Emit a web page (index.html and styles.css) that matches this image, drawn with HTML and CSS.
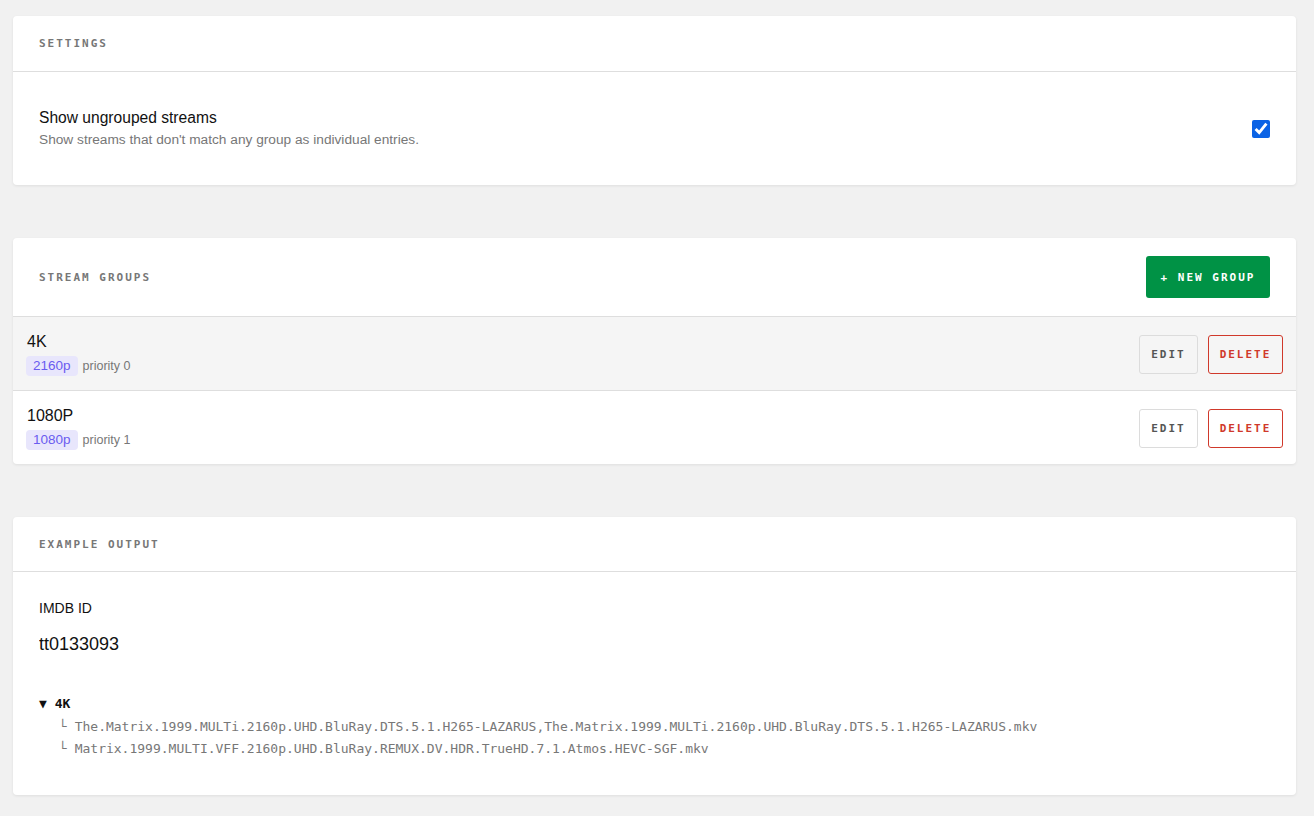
FILE: index.html
```html
<!DOCTYPE html>
<html lang="en">
<head>
    <meta charset="UTF-8">
    <meta name="viewport" content="width=device-width, initial-scale=1.0">
    <title>Stream Groups</title>
    <link rel="stylesheet" href="styles.css">
</head>
<body>
    <div class="page">

        <div class="card">
            <div class="card-head"><h2>Settings</h2></div>
            <div class="card-body setting">
                <div>
                    <div class="setting-title">Show ungrouped streams</div>
                    <div class="setting-sub">Show streams that don't match any group as individual entries.</div>
                </div>
                <input type="checkbox" class="check" checked>
            </div>
        </div>

        <div class="card">
            <div class="card-head">
                <h2>Stream Groups</h2>
                <button class="btn btn-green">+ New Group</button>
            </div>
            <div class="group active">
                <div>
                    <div class="group-name">4K</div>
                    <div class="group-meta"><span class="badge">2160p</span> priority 0</div>
                </div>
                <div class="group-actions">
                    <button class="btn btn-edit">Edit</button>
                    <button class="btn btn-delete">Delete</button>
                </div>
            </div>
            <div class="group">
                <div>
                    <div class="group-name">1080P</div>
                    <div class="group-meta"><span class="badge">1080p</span> priority 1</div>
                </div>
                <div class="group-actions">
                    <button class="btn btn-edit">Edit</button>
                    <button class="btn btn-delete">Delete</button>
                </div>
            </div>
        </div>

        <div class="card">
            <div class="card-head short"><h2>Example Output</h2></div>
            <div class="card-body output">
                <label class="field-label" for="imdb">IMDB ID</label>
                <input id="imdb" class="imdb" type="text" value="tt0133093">
                <div class="tree">
                    <div class="tree-title">▼ 4K</div>
                    <div class="tree-row">└ The.Matrix.1999.MULTi.2160p.UHD.BluRay.DTS.5.1.H265-LAZARUS,The.Matrix.1999.MULTi.2160p.UHD.BluRay.DTS.5.1.H265-LAZARUS.mkv</div>
                    <div class="tree-row">└ Matrix.1999.MULTI.VFF.2160p.UHD.BluRay.REMUX.DV.HDR.TrueHD.7.1.Atmos.HEVC-SGF.mkv</div>
                </div>
            </div>
        </div>

    </div>
</body>
</html>
```

FILE: styles.css
```css
body { margin: 0; background: #f1f1f1; font-family: "Liberation Sans", Arial, sans-serif; color: #111; }
.page { padding: 16px 18px 16px 13px; display: flex; flex-direction: column; gap: 53px; }

.card { background: #fff; border-radius: 4px; box-shadow: 0 1px 3px rgba(0,0,0,0.08); }
.card-head { min-height: 56px; box-sizing: border-box; padding: 18px 26px; display: flex; align-items: center; justify-content: space-between; border-bottom: 1px solid #dedede; }
.card-head.short { min-height: 55px; }
.card-head h2 { margin: 0; font-family: "DejaVu Sans Mono", monospace; font-size: 11px; font-weight: bold; letter-spacing: 2px; text-transform: uppercase; color: #777; }
.card-body { padding: 36px 26px; }

.setting { display: flex; align-items: center; justify-content: space-between; }
.setting-title { font-size: 15.6px; line-height: 20px; color: #111; }
.setting-sub { font-size: 13.7px; line-height: 18px; margin-top: 3px; color: #777; }
.check { width: 18px; height: 18px; margin: 0; accent-color: #0b63e5; }

.btn { font-family: "DejaVu Sans Mono", monospace; font-size: 11px; font-weight: bold; letter-spacing: 2px; text-transform: uppercase; border-radius: 3px; cursor: pointer; background: transparent; }
.btn-green { background: #009245; color: #fff; border: none; width: 124px; height: 42px; }
.btn-edit { border: 1px solid #dcdcdc; color: #555; width: 59px; height: 39px; padding: 0; }
.btn-delete { border: 1px solid #d0392b; color: #d0392b; width: 75px; height: 39px; padding: 0; }

.group { display: flex; align-items: center; justify-content: space-between; padding: 15px 13px 14px 13px; border-bottom: 1px solid #dedede; }
.group:last-child { border-bottom: none; }
.group.active { background: #f5f5f5; }
.group-name { font-size: 16px; line-height: 19px; margin-bottom: 5px; margin-left: 1px; }
.group-meta { font-size: 12.5px; color: #777; display: flex; align-items: center; gap: 5px; }
.group-actions { display: flex; gap: 10px; }
.badge { background: #e8e6fc; color: #6a5cf0; font-size: 13.5px; line-height: 20px; padding: 0 7px; border-radius: 4px; }

.output { padding: 28px 26px 35px; }
.field-label { display: block; font-size: 14px; line-height: 16px; }
.imdb { display: block; border: none; outline: none; padding: 0; margin-top: 17px; font-family: "Liberation Sans", Arial, sans-serif; font-size: 18px; line-height: 22px; height: 22px; color: #111; background: transparent; }
.tree { margin-top: 41px; font-family: "DejaVu Sans Mono", monospace; }
.tree-title { font-size: 13px; font-weight: bold; line-height: 16px; margin-bottom: 4px; }
.tree-row { font-size: 13px; line-height: 22px; color: #777; padding-left: 20px; white-space: nowrap; }
```
